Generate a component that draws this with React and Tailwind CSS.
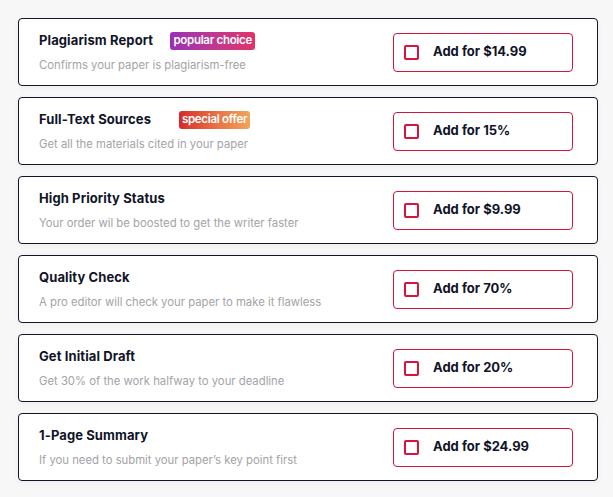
import React from "react";

const items = [
  { title: "Plagiarism Report", desc: "Confirms your paper is plagiarism-free", price: "$14.99", badge: "popular", gap: "ml-[17px]" },
  { title: "Full-Text Sources", desc: "Get all the materials cited in your paper", price: "15%", badge: "special", gap: "ml-[28px]" },
  { title: "High Priority Status", desc: "Your order wil be boosted to get the writer faster", price: "$9.99" },
  { title: "Quality Check", desc: "A pro editor will check your paper to make it flawless", price: "70%" },
  { title: "Get Initial Draft", desc: "Get 30% of the work halfway to your deadline", price: "20%" },
  { title: "1-Page Summary", desc: "If you need to submit your paper’s key point first", price: "$24.99" },
];

function Badge({ kind, gap }) {
  if (kind === "popular") {
    return (
      <span className={`${gap} inline-flex h-[18px] w-[85px] items-center justify-center rounded-[3px] bg-gradient-to-r from-[#9a2fb4] to-[#e3306a] text-[11.5px] font-semibold leading-none tracking-[-0.3px] text-white`}>
        popular choice
      </span>
    );
  }
  return (
    <span className={`${gap} inline-flex h-[18px] w-[71px] items-center justify-center rounded-[3px] bg-gradient-to-r from-[#d6262a] to-[#f1a45a] text-[11.5px] font-semibold leading-none tracking-[-0.3px] text-white`}>
      special offer
    </span>
  );
}

export default function App() {
  return (
    <div className="min-h-[497px] w-[613px] bg-[#f7f7f8] px-[18px] pt-[18px] pb-[14px] font-['Inter',sans-serif]">
      <div className="flex flex-col gap-[11px]">
        {items.map((it) => (
          <div
            key={it.title}
            className="flex h-[68px] w-[580px] items-center justify-between rounded-[4px] border border-[#14142b] bg-white pl-[20px] pr-[24px] shadow-[0_2px_6px_rgba(0,0,0,0.04)]"
          >
            <div className="flex flex-col gap-[7px] pt-[1px]">
              <div className="flex h-[18px] items-center">
                <span className="text-[13px] font-bold tracking-[0.1px] text-[#111427]">{it.title}</span>
                {it.badge && <Badge kind={it.badge} gap={it.gap} />}
              </div>
              <div className="text-[11.3px] leading-[16px] text-[#a3a3a8]">{it.desc}</div>
            </div>
            <button className="flex h-[39px] w-[180px] items-center rounded-[4px] border border-[#d3143a] bg-white pl-[10px]">
              <span className="h-[15px] w-[15px] rounded-[2px] border-2 border-[#d8143c]" />
              <span className="ml-[14px] text-[13px] font-bold text-[#111427]">Add for {it.price}</span>
            </button>
          </div>
        ))}
      </div>
    </div>
  );
}
